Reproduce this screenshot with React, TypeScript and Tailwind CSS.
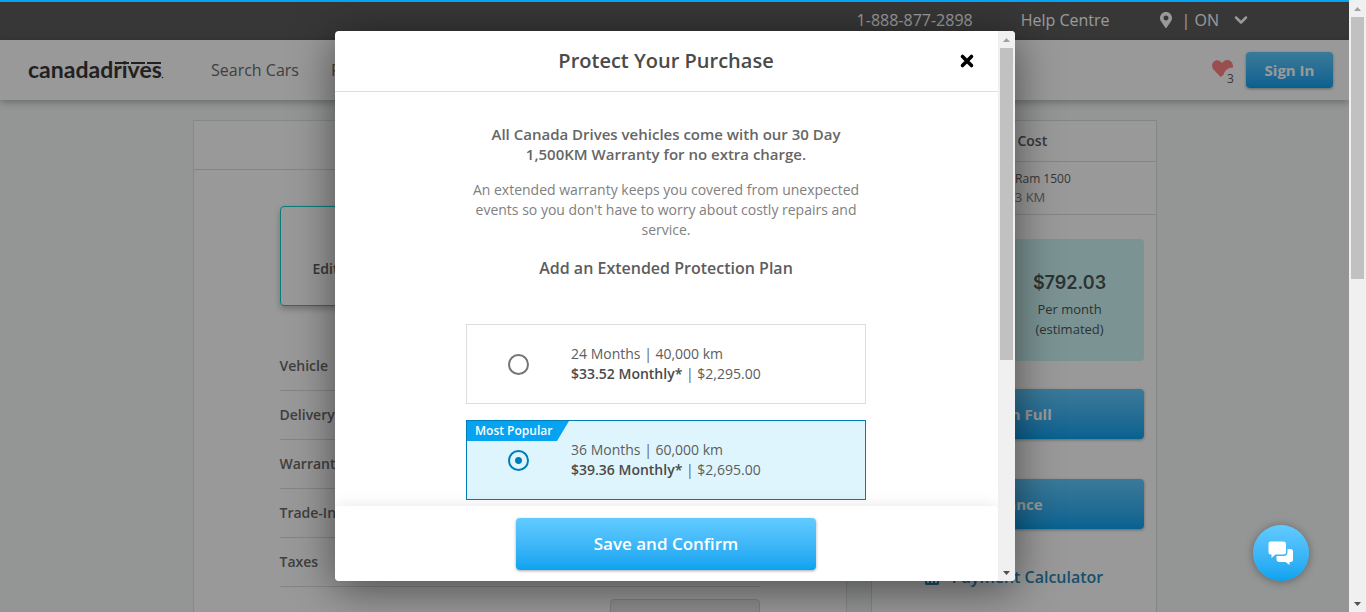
import React, { useState } from "react";
import { ChevronDown } from "lucide-react";
import { FaMapMarkerAlt, FaCalculator } from "react-icons/fa";
import clsx from "clsx";

const FONT = "font-['Open_Sans','Noto_Sans',sans-serif]";
const BLUE_BUTTON =
  "rounded bg-linear-to-b from-[#61cbff] to-[#05a3f1] text-white shadow-[0_1px_3px_rgba(0,0,0,0.35)]";

function Scrollbar({ thumb }: { thumb: string }) {
  return (
    <div aria-hidden="true" className="flex w-[17px] shrink-0 flex-col items-center bg-[#f0f0f0]">
      <svg width="17" height="17" viewBox="0 0 17 17" className="shrink-0">
        <path d="M5 11 L8.5 7 L12 11 Z" fill="#a0a0a0" />
      </svg>
      <div className={clsx("w-[13px] bg-[#c1c1c1]", thumb)} />
      <svg width="17" height="17" viewBox="0 0 17 17" className="mt-auto shrink-0">
        <path d="M5 7 L8.5 11 L12 7 Z" fill="#505050" />
      </svg>
    </div>
  );
}

function Logo() {
  return (
    <a href="#home" aria-label="canadadrives" className="block">
      <svg width="144" height="36" viewBox="0 0 144 36" fill="#383838">
        <text x="0" y="26" fontSize="23" fontWeight="700" fontFamily="Lato, sans-serif">
          canadadrives
        </text>
        <rect x="87" y="10" width="14" height="2" />
        <rect x="103" y="10" width="14" height="2" />
        <rect x="119" y="10" width="14" height="2" />
        <circle cx="134.500" cy="25.500" r="0.800" />
      </svg>
    </a>
  );
}

function Header() {
  return (
    <header className="relative">
      <div className="flex h-10 items-center bg-[#5d5d5d] pr-[98px] text-white">
        <a href="tel:1-888-877-2898" className="ml-auto">1-888-877-2898</a>
        <a href="#help" className="ml-12">Help Centre</a>
        <button type="button" className="ml-12 flex items-center">
          <FaMapMarkerAlt size={16} className="mr-2" />
          | ON
          <ChevronDown size={20} strokeWidth={3} className="ml-3" />
        </button>
      </div>
      <div className="flex h-[60px] items-center bg-white pr-4 pl-7 shadow-[0_2px_8px_rgba(0,0,0,0.3)]">
        <Logo />
        <nav className="ml-[39px] flex gap-8 text-[#6b6b6b]">
          <a href="#search">Search Cars</a>
          <a href="#finance">Finance</a>
        </nav>
        <a href="#saved" aria-label="Saved cars" className="mr-1 ml-auto flex">
          <svg width="32" height="36" viewBox="0 0 32 36">
            <path d="M10.500 25 L3.500 17.500 C-0.500 12.500 5 5.500 10.500 9.500 L12 11 L13.500 9.500 C18 6 23.500 9.500 23 15.500 C18 15.500 14.500 18.500 13.500 23 Z" fill="#ff8484" />
            <text x="17" y="31" fontSize="12" fill="#5d5d5d">3</text>
          </svg>
        </a>
        <button type="button" className={clsx("h-9 w-[87px] text-[15px] font-bold", BLUE_BUTTON)}>Sign In</button>
      </div>
    </header>
  );
}

const SUMMARY_ROWS = ["Vehicle", "Delivery", "Warranty", "Trade-In", "Taxes"];

function Summary() {
  return (
    <section className="grow border border-[#dfe4e2] bg-white">
      <div className="h-[49px] border-b border-[#dedede]" />
      <div className="mx-auto flex max-w-[480px] flex-col pt-9">
        <button
          type="button"
          className="flex h-[100px] w-[228px] items-end rounded border border-[#10d0cb] px-8 pb-[26px] text-sm font-semibold text-[#5d5d5d] shadow-[0_3px_6px_rgba(0,0,0,0.25)]"
        >
          Edit
        </button>
        <ul className="mt-9 text-sm font-semibold text-[#6b6b6b]">
          {SUMMARY_ROWS.map((row) => (
            <li key={row} className="flex h-[49px] items-center border-b border-[#dedede]">{row}</li>
          ))}
        </ul>
        <div className="mt-3 h-10 w-[150px] self-end rounded border border-[#d4d4d4] bg-[#ececec]" />
      </div>
    </section>
  );
}

function Cost() {
  return (
    <aside className="w-[286px] shrink-0 border border-[#dedede] bg-white text-center text-[#5d5d5d]">
      <h2 className="flex h-[41px] items-center justify-center border-b border-[#dedede] text-sm font-semibold">Total Cost</h2>
      <div className="h-[53px] border-b border-[#dedede] pt-2 text-xs leading-[18px]">
        <p>2019 Ram Ram 1500</p>
        <p className="text-[13px] text-[#808080]">42,593 KM</p>
      </div>
      <div className="flex flex-col px-3 pt-6">
        <div className="h-[122px] rounded bg-[#cef6f6] pt-7 pr-3 text-[#4a5555]">
          <div className="grid grid-cols-2">
            <div />
            <div>
              <p className="font-[Inter,sans-serif] text-lg leading-8 font-semibold">$792.03</p>
              <p className="text-[13px] leading-5">Per month<br />(estimated)</p>
            </div>
          </div>
        </div>
        <button type="button" className={clsx("mt-7 h-[50px] text-[15px] font-bold", BLUE_BUTTON)}>Pay in Full</button>
        <button type="button" className={clsx("mt-10 h-[50px] text-[15px] font-bold", BLUE_BUTTON)}>Finance</button>
        <a href="#calculator" className="mt-9 flex items-center justify-center gap-3 font-semibold text-[#2a86b5]">
          <FaCalculator size={16} />
          Payment Calculator
        </a>
      </div>
    </aside>
  );
}

const PLANS = [
  { id: "24", term: "24 Months | 40,000 km", monthly: "$33.52 Monthly*", total: "$2,295.00", popular: false },
  { id: "36", term: "36 Months | 60,000 km", monthly: "$39.36 Monthly*", total: "$2,695.00", popular: true },
];

function ProtectionDialog() {
  const [selected, setSelected] = useState("36");
  return (
    <div
      role="dialog"
      aria-modal="true"
      aria-labelledby="dialog-title"
      className="flex h-[550px] w-[680px] overflow-hidden rounded bg-white shadow-[0_8px_44px_rgba(0,0,0,0.5)]"
    >
      <div className="flex min-w-0 grow flex-col overflow-hidden">
        <div className="grid h-[61px] shrink-0 grid-cols-[48px_1fr_48px] items-center border-b border-[#dedede]">
          <h1 id="dialog-title" className="col-start-2 text-center text-xl font-semibold text-[#4a4a4a]">
            Protect Your Purchase
          </h1>
          <button type="button" aria-label="Close" className="ml-2 w-6">
            <svg width="18" height="18" viewBox="0 0 18 18">
              <path d="M4.500 4.500 L13.500 13.500 M13.500 4.500 L4.500 13.500" stroke="#000" strokeWidth="3.600" strokeLinecap="round" />
            </svg>
          </button>
        </div>
        <div className="min-h-0 grow overflow-hidden">
          <div className="mx-auto w-[400px] pt-8 text-center text-sm leading-5">
            <p className="px-5 text-[15px] leading-5 font-semibold text-[#666]">
              All Canada Drives vehicles come with our 30 Day 1,500KM Warranty for no extra charge.
            </p>
            <p className="mt-4 text-[#808080]">
              An extended warranty keeps you covered from unexpected events so you don't have to worry about costly repairs and service.
            </p>
            <h2 className="mt-4 text-base leading-6 font-semibold text-[#5d5d5d]">Add an Extended Protection Plan</h2>
            <div className="mt-11 flex flex-col gap-4 text-left">
              {PLANS.map((plan) => {
                const on = plan.id === selected;
                return (
                  <label
                    key={plan.id}
                    className={clsx(
                      "relative flex h-20 cursor-pointer items-center border pl-[41px] text-[#5d5d5d]",
                      on ? "border-[#007cb8] bg-[#dff5fe]" : "border-[#dedede] bg-white",
                    )}
                  >
                    {plan.popular && (
                      <span className="absolute top-0 left-0 h-5 w-[102px] bg-[#05a3f1] pl-2 text-xs leading-5 font-semibold text-white [clip-path:polygon(0_0,100%_0,90px_100%,0_100%)]">
                        Most Popular
                      </span>
                    )}
                    <input
                      type="radio"
                      name="plan"
                      checked={on}
                      onChange={() => setSelected(plan.id)}
                      className="size-[21px] appearance-none rounded-full border-2 border-[#757575] checked:border-[#007cb8] checked:bg-[radial-gradient(circle,#007cb8_3px,transparent_4px)]"
                    />
                    <span className="ml-[42px]">
                      {plan.term}
                      <br />
                      <b className="font-semibold text-[#4a4a4a]">{plan.monthly}</b> | {plan.total}
                    </span>
                  </label>
                );
              })}
            </div>
          </div>
        </div>
        <div className="relative flex h-[75px] shrink-0 justify-center rounded bg-white pt-3 shadow-[0_0_16px_rgba(0,0,0,0.1)]">
          <button type="button" className={clsx("h-[52px] w-[300px] text-[17px] font-semibold", BLUE_BUTTON)}>Save and Confirm</button>
        </div>
      </div>
      <Scrollbar thumb="h-[312px]" />
    </div>
  );
}

export default function App() {
  return (
    <div className={clsx("flex h-screen overflow-hidden", FONT)}>
      <div className="relative min-w-0 grow overflow-hidden bg-[#f5faf8]">
        <Header />
        <main className="mx-auto flex max-w-[964px] gap-6 pt-5">
          <Summary />
          <Cost />
        </main>
        <div className="absolute inset-0 flex items-center justify-center bg-black/40">
          <ProtectionDialog />
        </div>
        <div className="absolute inset-x-0 top-0 h-0.5 bg-[#05a3f1]" />
        <button
          type="button"
          aria-label="Open chat"
          className="absolute right-10 bottom-[31px] flex size-14 items-center justify-center rounded-full bg-linear-to-b from-[#61cbff] to-[#05a3f1] shadow-[0_1px_8px_rgba(0,0,0,0.35)]"
        >
          <svg width="26" height="25" viewBox="0 0 26 25" fill="#fff">
            <path d="M2 0.500 H15.500 Q18 0.500 18 3 V11 Q18 13.500 15.500 13.500 H7.500 L3.500 17 V13.500 H2.500 Q0.500 13.500 0.500 11 V3 Q0.500 0.500 2 0.500 Z" />
            <path d="M19.500 8 H22.500 Q25 8 25 10.500 V18.500 Q25 21 22.500 21 H21.500 V24 L17.500 21 H11.500 Q8.500 21 8.500 18 V15 H15.500 Q19.500 15 19.500 11 Z" />
          </svg>
        </button>
      </div>
      <Scrollbar thumb="h-[262px]" />
    </div>
  );
}
